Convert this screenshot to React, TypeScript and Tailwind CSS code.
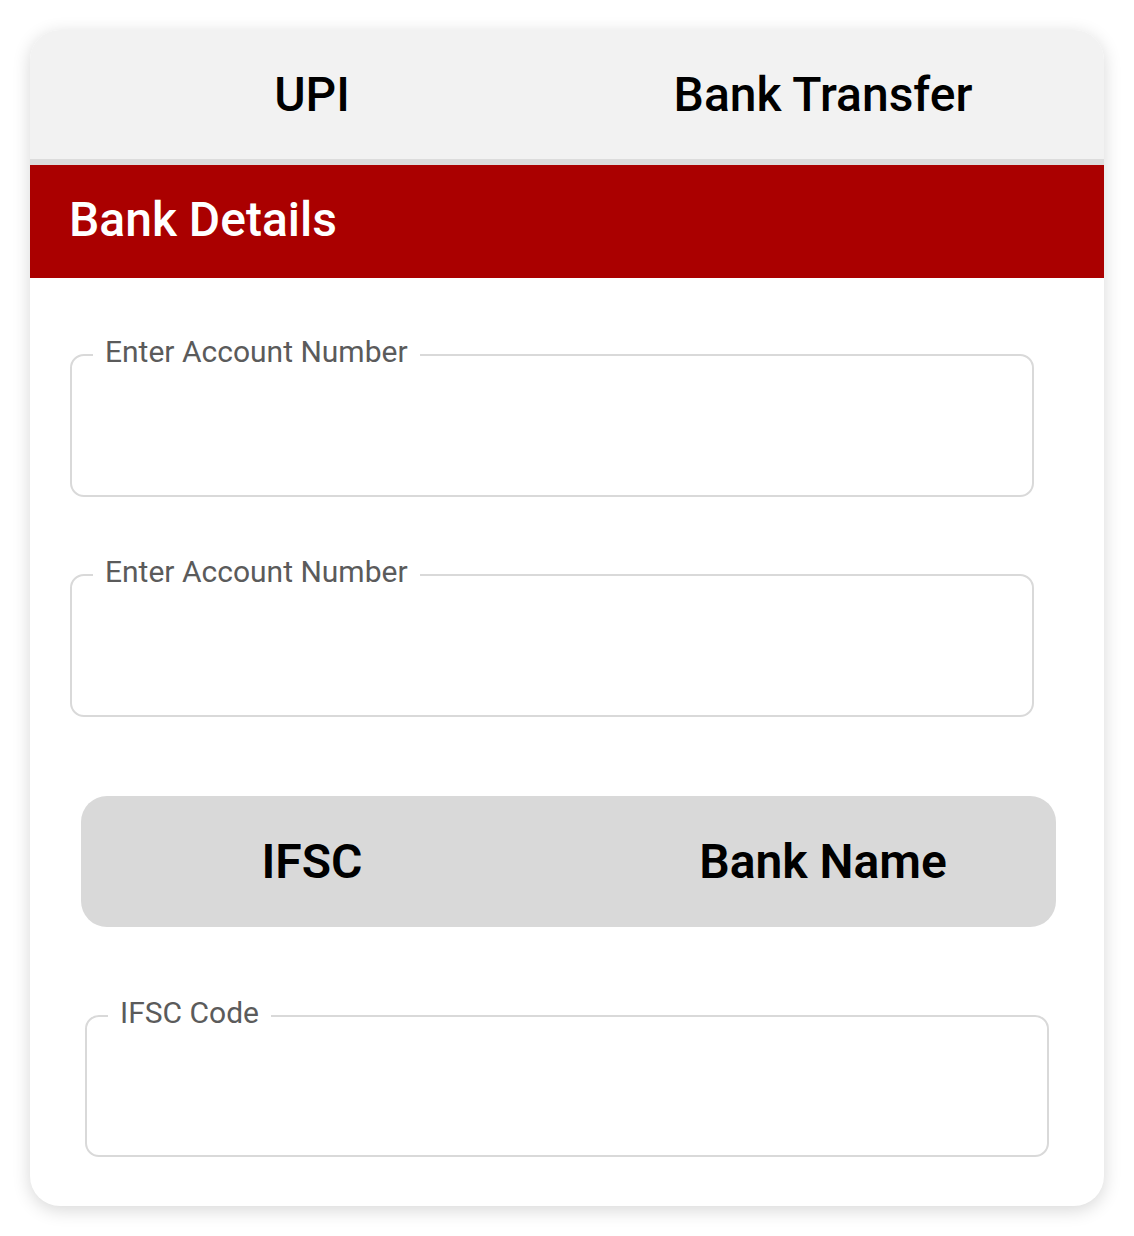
import React from "react";

function Field({ label, className }: { label: string; className?: string }) {
  return (
    <fieldset
      className={
        "w-[964px] border-2 border-[#d9d9d9] rounded-[14px] " + (className ?? "")
      }
    >
      <legend className="ml-[21px] px-[12px] pb-[6px] text-[30px] leading-[35px] text-[#5b5b5b] font-normal">
        {label}
      </legend>
    </fieldset>
  );
}

export default function App() {
  return (
    <div
      className="bg-white p-[30px]"
      style={{ fontFamily: "Roboto, 'Noto Sans', sans-serif" }}
    >
      <div className="w-[1074px] h-[1176px] rounded-[30px] bg-white overflow-hidden shadow-[0_4px_18px_rgba(0,0,0,0.16)]">
        {/* Tabs */}
        <div className="h-[129px] bg-[#f2f2f2] flex items-center text-black text-[48px] font-medium">
          <span className="ml-[182px] w-[200px] text-center">UPI</span>
          <span className="ml-[211px] w-[400px] text-center">Bank Transfer</span>
        </div>
        <div className="h-[6px] bg-[#dcdcdc]" />
        {/* Header */}
        <div className="h-[113px] bg-[#aa0000] flex items-center pl-[39px] pb-[4px]">
          <h2 className="text-white text-[48px] font-medium">Bank Details</h2>
        </div>
        {/* Body */}
        <div className="pl-[40px] flex flex-col items-start">
          <Field label="Enter Account Number" className="mt-[56px] h-[163px]" />
          <Field label="Enter Account Number" className="mt-[57px] h-[163px]" />
          <div className="mt-[79px] ml-[11px] w-[975px] h-[131px] rounded-[26px] bg-[#d9d9d9] flex items-center text-black text-[48px] font-semibold">
            <span className="ml-[131px] w-[200px] text-center">IFSC</span>
            <span className="ml-[261px] w-[300px] text-center">Bank Name</span>
          </div>
          <Field label="IFSC Code" className="mt-[68px] ml-[15px] h-[162px]" />
        </div>
      </div>
    </div>
  );
}
